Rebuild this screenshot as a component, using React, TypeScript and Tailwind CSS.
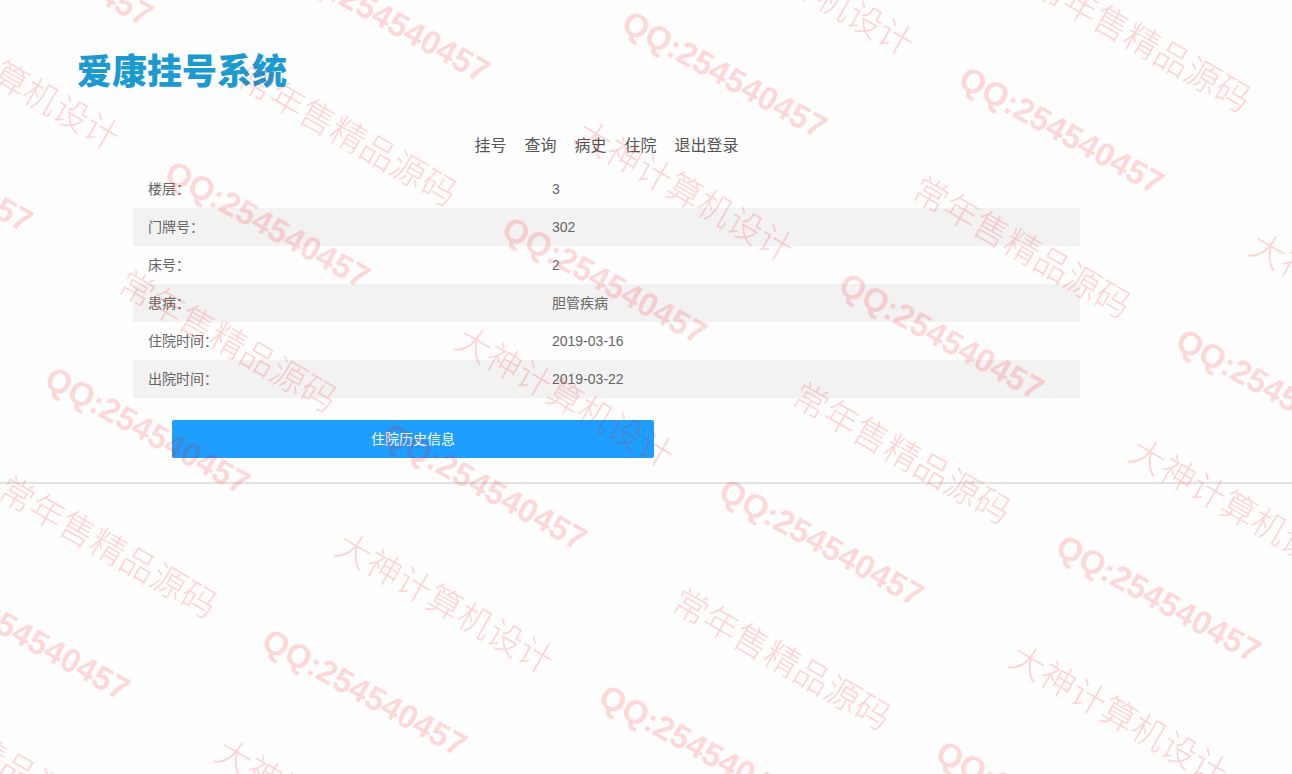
import React from "react";

const navItems: string[] = ["挂号", "查询", "病史", "住院", "退出登录"];

const rows: { label: string; value: string }[] = [
  { label: "楼层：", value: "3" },
  { label: "门牌号：", value: "302" },
  { label: "床号：", value: "2" },
  { label: "患病：", value: "胆管疾病" },
  { label: "住院时间：", value: "2019-03-16" },
  { label: "出院时间：", value: "2019-03-22" },
];

type Mark = { key: string; left: number; top: number; text: string; kind: "qq" | "cn" };

// The marks repeat on a slanted lattice; slogans alternate along each row.
function buildMarks(): Mark[] {
  const marks: Mark[] = [];
  for (let j = -2; j <= 5; j++) {
    for (let i = -4; i <= 5; i++) {
      const dx = 337 * i - 120 * j;
      const dy = 56 * i + 206 * j;
      marks.push({ key: `q${i}_${j}`, left: 634 + dx, top: 3 + dy, text: "QQ:254540457", kind: "qq" });
      marks.push({
        key: `c${i}_${j}`,
        left: 588 + dx,
        top: 114 + dy,
        text: i % 2 === 0 ? "大神计算机设计" : "常年售精品源码",
        kind: "cn",
      });
    }
  }
  return marks.filter((m) => m.left > -230 && m.left < 1310 && m.top > -140 && m.top < 774);
}

function Watermark() {
  return (
    <div aria-hidden="true" className="pointer-events-none fixed inset-0 select-none overflow-hidden">
      {buildMarks().map((m) => (
        <span
          key={m.key}
          style={{ left: m.left, top: m.top }}
          className={
            m.kind === "qq"
              ? "absolute origin-top-left rotate-[29deg] whitespace-nowrap text-[33px] font-bold leading-[38px] text-[#ff0000]/15"
              : "absolute origin-top-left rotate-[30deg] whitespace-nowrap text-[35px] font-light leading-[38px] text-[#ff0000]/17"
          }
        >
          {m.text}
        </span>
      ))}
    </div>
  );
}

export default function App() {
  return (
    <div className="min-h-screen bg-[#fefefe] font-['Liberation_Sans','Noto_Sans_CJK_SC',sans-serif] text-sm text-[#666]">
      <header className="px-[77px] pt-[47px]">
        <h1 className="text-[35px] font-black leading-[50px] text-[#1b9ad2]">爱康挂号系统</h1>
      </header>

      <main className="border-b-2 border-[#e2e2e2] pb-6 pl-[133px] pr-[212px] pt-[37px]">
        <nav className="flex justify-center gap-[18px] text-base leading-6 text-[#555]">
          {navItems.map((item) => (
            <a key={item} href="#" className="whitespace-nowrap">
              {item}
            </a>
          ))}
        </nav>

        <table className="mt-3 w-full table-fixed border-collapse text-left">
          <colgroup>
            <col className="w-[404px]" />
            <col />
          </colgroup>
          <tbody>
            {rows.map((row) => (
              <tr key={row.label} className="h-[38px] even:bg-[#f2f2f2]">
                <th scope="row" className="px-[15px] py-0 font-normal leading-5">
                  {row.label}
                </th>
                <td className="px-[15px] py-0 leading-5">{row.value}</td>
              </tr>
            ))}
          </tbody>
        </table>

        <button
          type="button"
          className="ml-[39px] mt-[22px] block h-[38px] w-[482px] max-w-full rounded-xs bg-[#1e9fff] text-center text-white"
        >
          住院历史信息
        </button>
      </main>

      <Watermark />
    </div>
  );
}
